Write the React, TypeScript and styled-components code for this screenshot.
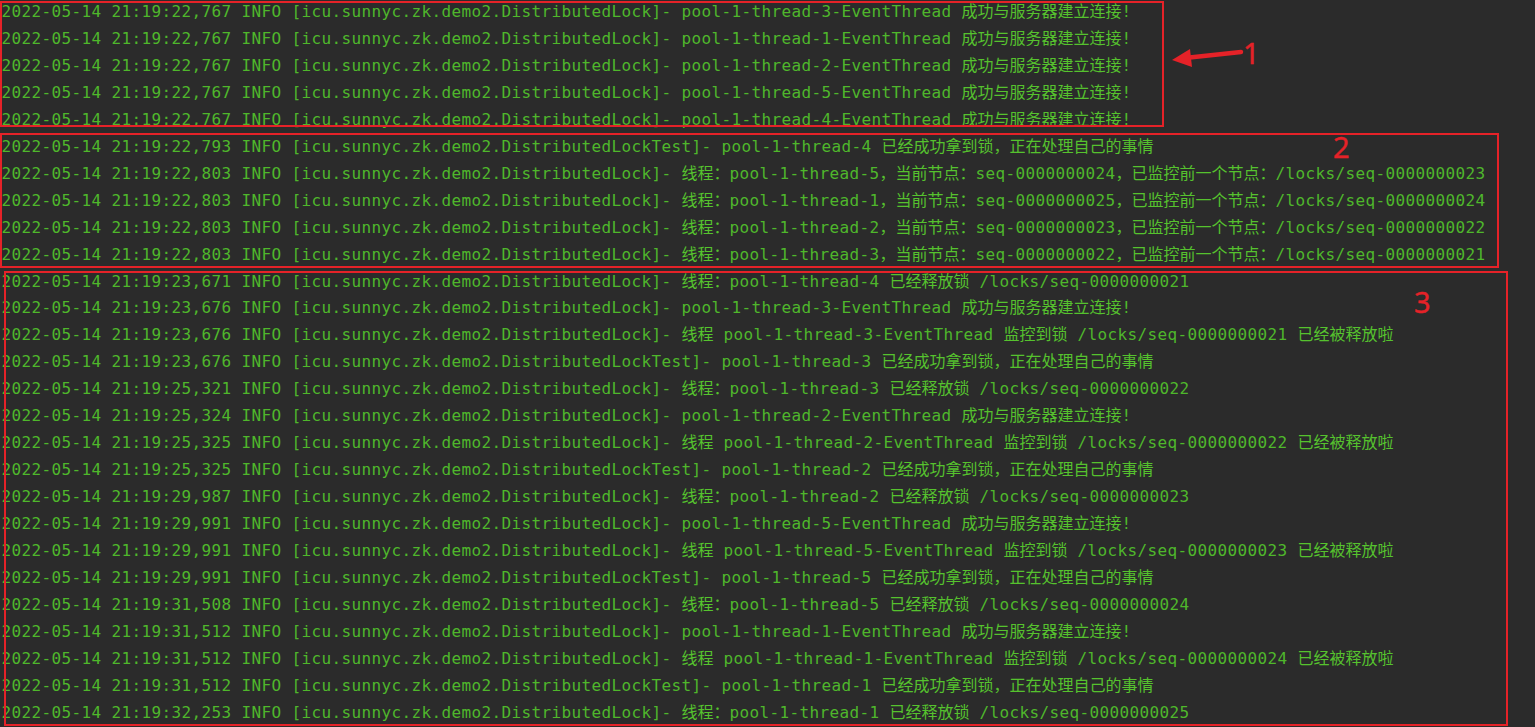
import React from 'react';
import styled, { createGlobalStyle } from 'styled-components';

const GlobalStyle = createGlobalStyle`
  html, body { margin: 0; padding: 0; background: #2b2b2b; }
  body { overflow: hidden; }
`;

const Console = styled.div`
  position: relative;
  width: 1535px;
  height: 727px;
  overflow: hidden;
  background: #2b2b2b;
`;

const Log = styled.div`
  display: flex;
  flex-direction: column;
  padding-left: 1.5px;
  font-family: "DejaVu Sans Mono", "Noto Sans CJK SC", monospace;
  font-size: 16px;
  color: #4fb72b;
`;

const Line = styled.div`
  flex: 0 0 26.96px;
  height: 26.96px;
  line-height: 24px;
  white-space: pre;
`;

const Latin = styled.span`
  letter-spacing: 0.367px;
`;

const Han = styled.span`
  letter-spacing: 0;
  color: #56c22e;
`;

/* Red hand-drawn annotations lying over the console output */
const Overlay = styled.div`
  position: absolute;
  inset: 0;
  pointer-events: none;
`;

const Frame = styled.div<{ $left: number; $top: number; $width: number; $height: number }>`
  position: absolute;
  left: ${(p) => p.$left}px;
  top: ${(p) => p.$top}px;
  width: ${(p) => p.$width}px;
  height: ${(p) => p.$height}px;
  border: 2px solid #e52228;
  box-sizing: border-box;
`;

const Mark = styled.div<{ $left: number; $top: number }>`
  position: absolute;
  left: ${(p) => p.$left}px;
  top: ${(p) => p.$top}px;
  font-family: "Noto Sans", "Liberation Sans", sans-serif;
  font-size: 29px;
  line-height: 1;
  color: #e52228;
  -webkit-text-stroke: 0.4px #e52228;
`;

const Arrow = styled.svg`
  position: absolute;
  left: 1165px;
  top: 40px;
  width: 85px;
  height: 35px;
`;

const L = (t: string) => `2022-05-14 21:19:${t} INFO [icu.sunnyc.zk.demo2.DistributedLock]- `;
const T = (t: string) => `2022-05-14 21:19:${t} INFO [icu.sunnyc.zk.demo2.DistributedLockTest]- `;

const lines: string[] = [
  L('22,767') + 'pool-1-thread-3-EventThread 成功与服务器建立连接!',
  L('22,767') + 'pool-1-thread-1-EventThread 成功与服务器建立连接!',
  L('22,767') + 'pool-1-thread-2-EventThread 成功与服务器建立连接!',
  L('22,767') + 'pool-1-thread-5-EventThread 成功与服务器建立连接!',
  L('22,767') + 'pool-1-thread-4-EventThread 成功与服务器建立连接!',
  T('22,793') + 'pool-1-thread-4 已经成功拿到锁，正在处理自己的事情',
  L('22,803') + '线程：pool-1-thread-5，当前节点：seq-0000000024，已监控前一个节点：/locks/seq-0000000023',
  L('22,803') + '线程：pool-1-thread-1，当前节点：seq-0000000025，已监控前一个节点：/locks/seq-0000000024',
  L('22,803') + '线程：pool-1-thread-2，当前节点：seq-0000000023，已监控前一个节点：/locks/seq-0000000022',
  L('22,803') + '线程：pool-1-thread-3，当前节点：seq-0000000022，已监控前一个节点：/locks/seq-0000000021',
  L('23,671') + '线程：pool-1-thread-4 已经释放锁 /locks/seq-0000000021',
  L('23,676') + 'pool-1-thread-3-EventThread 成功与服务器建立连接!',
  L('23,676') + '线程 pool-1-thread-3-EventThread 监控到锁 /locks/seq-0000000021 已经被释放啦',
  T('23,676') + 'pool-1-thread-3 已经成功拿到锁，正在处理自己的事情',
  L('25,321') + '线程：pool-1-thread-3 已经释放锁 /locks/seq-0000000022',
  L('25,324') + 'pool-1-thread-2-EventThread 成功与服务器建立连接!',
  L('25,325') + '线程 pool-1-thread-2-EventThread 监控到锁 /locks/seq-0000000022 已经被释放啦',
  T('25,325') + 'pool-1-thread-2 已经成功拿到锁，正在处理自己的事情',
  L('29,987') + '线程：pool-1-thread-2 已经释放锁 /locks/seq-0000000023',
  L('29,991') + 'pool-1-thread-5-EventThread 成功与服务器建立连接!',
  L('29,991') + '线程 pool-1-thread-5-EventThread 监控到锁 /locks/seq-0000000023 已经被释放啦',
  T('29,991') + 'pool-1-thread-5 已经成功拿到锁，正在处理自己的事情',
  L('31,508') + '线程：pool-1-thread-5 已经释放锁 /locks/seq-0000000024',
  L('31,512') + 'pool-1-thread-1-EventThread 成功与服务器建立连接!',
  L('31,512') + '线程 pool-1-thread-1-EventThread 监控到锁 /locks/seq-0000000024 已经被释放啦',
  T('31,512') + 'pool-1-thread-1 已经成功拿到锁，正在处理自己的事情',
  L('32,253') + '线程：pool-1-thread-1 已经释放锁 /locks/seq-0000000025',
];

const hanRe = /([\u3000-\u9fff\uff00-\uffef]+)/;

function LogLine({ text }: { text: string }) {
  const parts = text.split(hanRe).filter((s) => s.length > 0);
  return (
    <Line>
      {parts.map((p, i) =>
        hanRe.test(p) ? <Han key={i}>{p}</Han> : <Latin key={i}>{p}</Latin>
      )}
    </Line>
  );
}

const frames = [
  { left: 0, top: 1, width: 1164, height: 126 },
  { left: 0, top: 133, width: 1499, height: 135 },
  { left: 4, top: 271, width: 1504, height: 455 },
];

const marks = [
  { label: '1', left: 1243, top: 38 },
  { label: '2', left: 1333, top: 132 },
  { label: '3', left: 1414, top: 287 },
];

export default function App() {
  return (
    <>
      <GlobalStyle />
      <Console>
        <Log>
          {lines.map((t, i) => (
            <LogLine key={i} text={t} />
          ))}
        </Log>
        <Overlay>
          {frames.map((f, i) => (
            <Frame key={i} $left={f.left} $top={f.top} $width={f.width} $height={f.height} />
          ))}
          <Arrow viewBox="0 0 85 35">
            <line x1="20" y1="18" x2="76" y2="12" stroke="#e52228" strokeWidth="4.5" strokeLinecap="round" />
            <polygon points="7,20 25,9 27,27" fill="#e52228" />
          </Arrow>
          {marks.map((m) => (
            <Mark key={m.label} $left={m.left} $top={m.top}>
              {m.label}
            </Mark>
          ))}
        </Overlay>
      </Console>
    </>
  );
}
